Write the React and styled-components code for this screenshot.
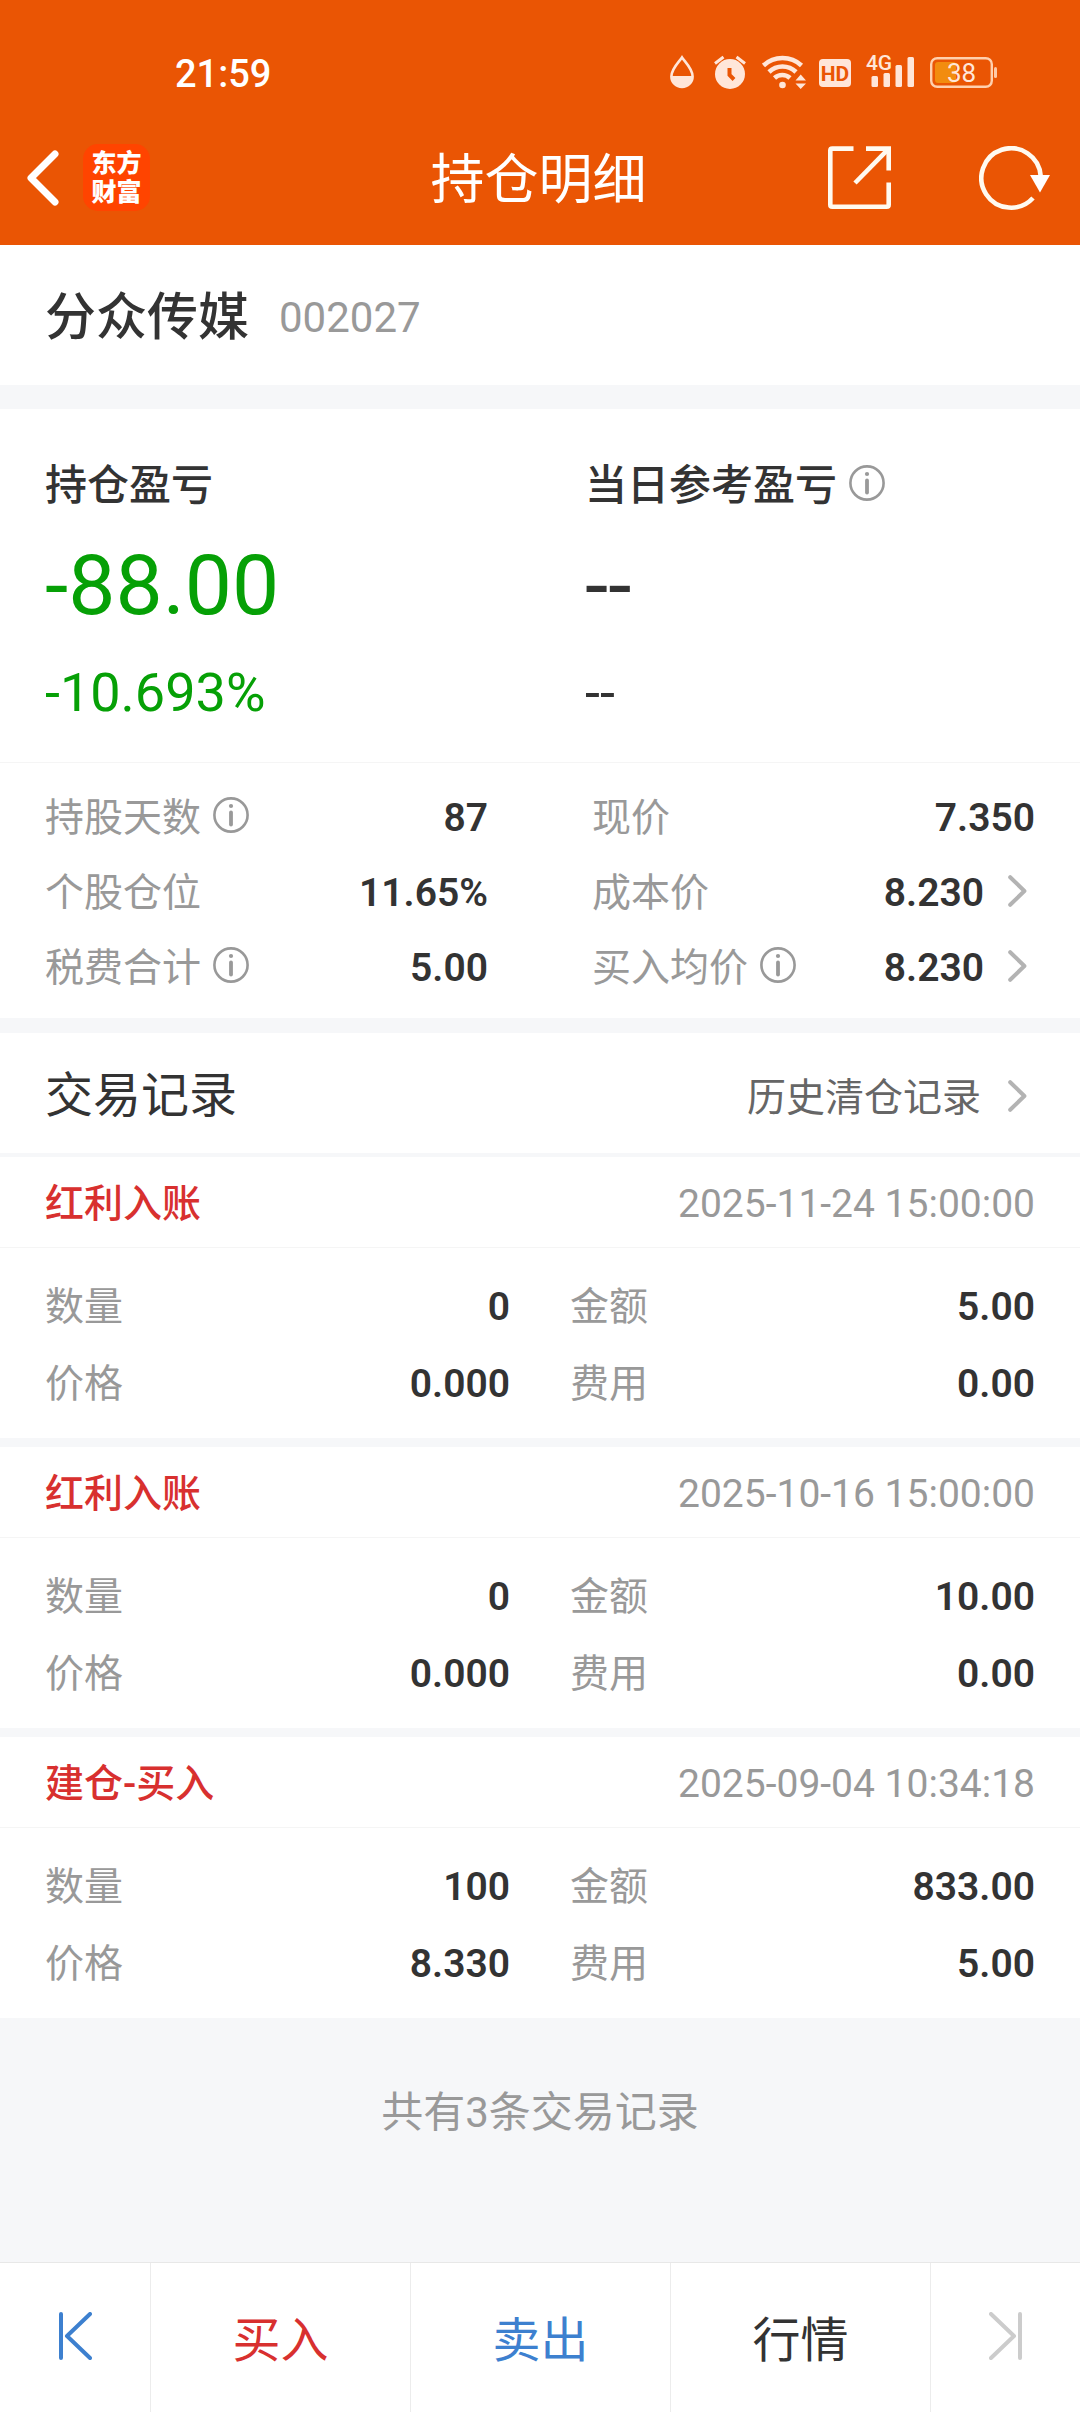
import React from "react";
import styled, { createGlobalStyle } from "styled-components";

const profit = [
  { label: "持仓盈亏", amount: "-88.00", percent: "-10.693%", isDown: true },
  { label: "当日参考盈亏", amount: "--", percent: "--", hasInfo: true }
];

const details = [
  { label: "持股天数", value: "87", hasInfo: true },
  { label: "现价", value: "7.350" },
  { label: "个股仓位", value: "11.65%" },
  { label: "成本价", value: "8.230", hasLink: true },
  { label: "税费合计", value: "5.00", hasInfo: true },
  { label: "买入均价", value: "8.230", hasInfo: true, hasLink: true }
];

const records = [
  {
    type: "红利入账",
    time: "2025-11-24 15:00:00",
    count: "0",
    amount: "5.00",
    price: "0.000",
    fee: "0.00"
  },
  {
    type: "红利入账",
    time: "2025-10-16 15:00:00",
    count: "0",
    amount: "10.00",
    price: "0.000",
    fee: "0.00"
  },
  {
    type: "建仓-买入",
    time: "2025-09-04 10:34:18",
    count: "100",
    amount: "833.00",
    price: "8.330",
    fee: "5.00"
  }
];

export default function App() {
  return (
    <>
      <GlobalStyle />
      <Page>
        <Header>
          <StatusBar>
            <Clock>21:59</Clock>
            <StatusIcons />
          </StatusBar>
          <NavBar>
            <NavGroup>
              <IconButton aria-label="返回">
                <BackIcon />
              </IconButton>
              <Logo>
                <span>东方</span>
                <span>财富</span>
              </Logo>
            </NavGroup>
            <Title>持仓明细</Title>
            <NavActions>
              <IconButton aria-label="分享">
                <ShareIcon />
              </IconButton>
              <IconButton aria-label="刷新">
                <RefreshIcon />
              </IconButton>
            </NavActions>
          </NavBar>
        </Header>

        <StockBar>
          <StockName>分众传媒</StockName>
          <StockCode>002027</StockCode>
        </StockBar>

        <ProfitPanel>
          {profit.map(item => (
            <ProfitColumn key={item.label}>
              <ProfitLabel>
                {item.label}
                {item.hasInfo && <Info label={item.label} />}
              </ProfitLabel>
              <ProfitAmount isDown={item.isDown}>{item.amount}</ProfitAmount>
              <ProfitPercent isDown={item.isDown}>{item.percent}</ProfitPercent>
            </ProfitColumn>
          ))}
        </ProfitPanel>

        <DetailList>
          {details.map(item => (
            <DetailRow key={item.label}>
              <Term>
                {item.label}
                {item.hasInfo && <Info label={item.label} />}
              </Term>
              <Value>
                {item.value}
                {item.hasLink && (
                  <ArrowButton aria-label={`查看${item.label}`}>
                    <ChevronIcon />
                  </ArrowButton>
                )}
              </Value>
            </DetailRow>
          ))}
        </DetailList>

        <SectionHead>
          <SectionTitle>交易记录</SectionTitle>
          <HistoryLink href="#history">
            历史清仓记录
            <ChevronIcon />
          </HistoryLink>
        </SectionHead>

        <RecordList>
          {records.map(record => (
            <Record key={record.time}>
              <RecordHead>
                <RecordType>{record.type}</RecordType>
                <RecordTime>{record.time}</RecordTime>
              </RecordHead>
              <RecordBody>
                <RecordField label="数量" value={record.count} />
                <RecordField label="金额" value={record.amount} />
                <RecordField label="价格" value={record.price} />
                <RecordField label="费用" value={record.fee} />
              </RecordBody>
            </Record>
          ))}
        </RecordList>

        <Summary>共有{records.length}条交易记录</Summary>

        <BottomBar>
          <StepButton color="#3d80cf" aria-label="上一个">
            <StepIcon />
          </StepButton>
          <BarButton color="#d8302f">买入</BarButton>
          <BarButton color="#3d80cf">卖出</BarButton>
          <BarButton color="#333">行情</BarButton>
          <StepButton color="#ccc" aria-label="下一个">
            <StepIcon isNext />
          </StepButton>
        </BottomBar>
      </Page>
    </>
  );
}

function RecordField({ label, value }) {
  return (
    <RecordRow>
      <Term>{label}</Term>
      <Value>{value}</Value>
    </RecordRow>
  );
}

function Info({ label }) {
  return (
    <InfoButton aria-label={`${label}说明`}>
      <svg width="36" height="36" viewBox="0 0 36 36">
        <circle cx="18" cy="18" r="16.6" fill="none" stroke="#999" strokeWidth="2.6" />
        <circle cx="18" cy="9" r="2.1" fill="#999" />
        <path d="M18 15.5V27.5" stroke="#999" strokeWidth="3.8" strokeLinecap="round" />
      </svg>
    </InfoButton>
  );
}

function BackIcon() {
  return (
    <svg width="32" height="56" viewBox="0 0 32 56" fill="none">
      <path
        d="M28 4L4 28L28 52"
        stroke="#fff"
        strokeWidth="7"
        strokeLinecap="round"
        strokeLinejoin="round"
      />
    </svg>
  );
}

function ShareIcon() {
  return (
    <svg width="63" height="63" viewBox="0 0 63 63" fill="none" stroke="#fffaf0" strokeWidth="4.6">
      <path d="M25.5 2.6H4.3Q2.3 2.6 2.3 4.6V58.7Q2.3 60.7 4.3 60.7H58.7Q60.7 60.7 60.7 58.7V36.5" />
      <path d="M38 2.6H60.7V24.5" />
      <path d="M60 3.3L27 37" />
    </svg>
  );
}

function RefreshIcon() {
  return (
    <svg width="71" height="64" viewBox="0 0 71 64" fill="none">
      <path d="M61.7 30A29.7 29.7 0 1 0 54 52" stroke="#fffaf0" strokeWidth="4.6" />
      <path d="M51 29H71L61 46.5Z" fill="#fff" />
    </svg>
  );
}

function ChevronIcon() {
  return (
    <Chevron width="19" height="32" viewBox="0 0 19 32" fill="none">
      <path
        d="M2.2 2.2L16.4 16L2.2 29.8"
        stroke="#b3b3b3"
        strokeWidth="4"
        strokeLinecap="round"
        strokeLinejoin="round"
      />
    </Chevron>
  );
}

function StepIcon({ isNext }) {
  return (
    <svg
      width="34"
      height="48"
      viewBox="0 0 34 48"
      fill="none"
      stroke="currentColor"
      strokeWidth="4"
      strokeLinecap="round"
      strokeLinejoin="round"
    >
      {isNext ? (
        <path d="M31 2V46M2 2L25 24L2 46" />
      ) : (
        <path d="M3 2V46M32 2L9 24L32 46" />
      )}
    </svg>
  );
}

function StatusIcons() {
  return (
    <StatusGroup>
      {/* eye comfort */}
      <svg width="28" height="34" viewBox="0 0 28 34">
        <path
          d="M12 2.4C9 7 1.4 13.5 1.4 21.4A10.6 10.6 0 0 0 22.6 21.4C22.6 13.5 15 7 12 2.4Z"
          fill="none"
          stroke="#ffe6d9"
          strokeWidth="2.6"
        />
        <path d="M1.4 21H22.6A10.6 11 0 0 1 1.4 21Z" fill="#ffe6d9" />
      </svg>
      {/* alarm */}
      <svg width="32" height="34" viewBox="0 0 32 34">
        <circle cx="16" cy="19" r="15" fill="#ffe6d9" />
        <path d="M1 8.5L9.5 2M31 8.5L22.5 2" stroke="#ffe6d9" strokeWidth="3" />
        <path d="M15.5 13V20L20 24.5" stroke="#ea5504" strokeWidth="4" fill="none" />
      </svg>
      {/* wifi */}
      <svg width="41" height="34" viewBox="0 0 41 34" overflow="visible">
        <g fill="none" stroke="#ffe6d9" strokeWidth="4.6">
          <path d="M1.5 10.5A28 28 0 0 1 39.5 10.5" />
          <path d="M7 17A19.5 19.5 0 0 1 34 17" />
          <path d="M12.5 23A11.5 11.5 0 0 1 28 23" />
        </g>
        <circle cx="20.5" cy="30" r="3.3" fill="#ffe6d9" />
        <path d="M33.5 25.5L38.7 19.5L44 25.5ZM33.5 28.5L38.7 34L44 28.5Z" fill="#ffe6d9" />
      </svg>
      {/* HD voice */}
      <svg width="32" height="34" viewBox="0 0 32 34">
        <rect y="4" width="32" height="28" rx="4" fill="#ffe6d9" />
        <StatusText x="16" y="26" size={21} weight={700} fill="#ea5504">
          HD
        </StatusText>
      </svg>
      {/* signal */}
      <svg width="47" height="34" viewBox="0 0 47 34" overflow="visible">
        <StatusText x="12" y="15" size={21} weight={500} fill="#ffe6d9">
          4G
        </StatusText>
        <g fill="#ffe6d9">
          <rect x="4.5" y="21" width="6.5" height="11" rx="1.5" />
          <rect x="16.5" y="18" width="6.5" height="14" rx="1.5" />
          <rect x="28.5" y="10" width="6.5" height="22" rx="1.5" />
          <rect x="40.5" y="2" width="6.5" height="30" rx="1.5" />
        </g>
      </svg>
      {/* battery */}
      <svg width="67" height="34" viewBox="0 0 67 34">
        <rect x="1.2" y="3.2" width="60.6" height="28.6" rx="6" fill="none" stroke="#ffd0ae" strokeWidth="2.4" />
        <rect x="5" y="7" width="21" height="21" rx="3" fill="#f28c0f" />
        <rect x="64" y="12" width="3" height="11" rx="1.5" fill="#ffc9a6" />
        <StatusText x="31.5" y="27" size={26} weight={400} fill="#ffe6d9">
          38
        </StatusText>
      </svg>
    </StatusGroup>
  );
}

const GlobalStyle = createGlobalStyle`
  body {
    margin: 0;
    background: #f6f7f9;
    color: #333;
    font-family: Roboto, "Noto Sans CJK SC", sans-serif;
  }

  * {
    box-sizing: border-box;
  }

  svg {
    display: block;
    flex-shrink: 0;
  }
`;

const Page = styled.div`
  display: flex;
  flex-direction: column;
  min-height: 100vh;
`;

const Header = styled.header`
  padding-bottom: 35px;
  color: #fff;
  background: #ea5504;
`;

const StatusBar = styled.div`
  display: flex;
  align-items: center;
  justify-content: space-between;
  height: 144px;
  padding: 0 83px 0 175px;
`;

const Clock = styled.span`
  padding-top: 4px;
  font-size: 38px;
  font-weight: 500;
  line-height: 48px;
`;

const StatusGroup = styled.div`
  display: flex;
  align-items: center;
  gap: 16px;
`;

const StatusText = styled.text.withConfig({
  shouldForwardProp: prop => !["size", "weight"].includes(prop)
})`
  font-size: ${props => props.size}px;
  font-weight: ${props => props.weight};
  text-anchor: middle;
`;

const NavBar = styled.div`
  display: grid;
  grid-template-columns: 1fr auto 1fr;
  align-items: center;
  height: 66px;
  padding: 0 30px 0 27px;
`;

const NavGroup = styled.div`
  display: flex;
  align-items: center;
  gap: 24px;
`;

const NavActions = styled(NavGroup)`
  justify-content: flex-end;
  gap: 88px;
`;

const IconButton = styled.button.attrs({ type: "button" })`
  display: flex;
  align-items: center;
  padding: 0;
  border: none;
  background: none;
  cursor: pointer;
`;

const InfoButton = styled(IconButton)`
  padding-bottom: 6px;
`;

const Chevron = styled.svg`
  margin-bottom: 4px;
`;

const Logo = styled.div`
  display: flex;
  flex-direction: column;
  align-items: center;
  justify-content: center;
  width: 67px;
  height: 67px;
  border-radius: 15px;
  background: #ff4400;
  font-size: 25px;
  font-weight: 900;
  line-height: 29px;
`;

const Title = styled.h1`
  margin: 0;
  padding-top: 6px;
  font-size: 54px;
  font-weight: 400;
  line-height: 60px;
`;

const StockBar = styled.section`
  display: flex;
  align-items: center;
  gap: 30px;
  height: 140px;
  padding: 6px 45px 0;
  background: #fff;
`;

const StockName = styled.h2`
  margin: 0;
  font-size: 51px;
  font-weight: 500;
  line-height: 60px;
`;

const StockCode = styled.span`
  color: #999;
  font-size: 42px;
  line-height: 60px;
`;

const ProfitPanel = styled.section`
  display: grid;
  grid-template-columns: 1fr 1fr;
  margin-top: 24px;
  padding: 47px 0 39px;
  border-bottom: 1px solid #f5f5f5;
  background: #fff;
`;

const ProfitColumn = styled.div`
  padding-left: 45px;
`;

const ProfitLabel = styled.div`
  display: flex;
  align-items: center;
  gap: 12px;
  font-size: 42px;
  font-weight: 500;
  line-height: 60px;
`;

const ProfitAmount = styled.div.withConfig({
  shouldForwardProp: prop => prop !== "isDown"
})`
  margin-top: 20px;
  color: ${props => (props.isDown ? "#06a006" : "#333")};
  font-size: 84px;
  line-height: 100px;
`;

const ProfitPercent = styled(ProfitAmount)`
  margin-top: 27px;
  font-size: 54px;
  line-height: 60px;
`;

const DetailList = styled.dl`
  display: grid;
  grid-template-columns: 1fr 1fr;
  column-gap: 104px;
  margin: 0;
  padding: 17px 45px 13px;
  background: #fff;
`;

const DetailRow = styled.div`
  display: flex;
  align-items: center;
  justify-content: space-between;
  height: 75px;
  font-size: 39px;
  line-height: 60px;
`;

const Term = styled.dt`
  display: flex;
  align-items: center;
  gap: 12px;
  color: #999;
`;

const Value = styled.dd`
  display: flex;
  align-items: center;
  gap: 24px;
  margin: 0;
  font-weight: 600;
`;

const ArrowButton = styled(IconButton)`
  padding-right: 8px;
`;

const SectionHead = styled.div`
  display: flex;
  align-items: center;
  justify-content: space-between;
  height: 120px;
  margin-top: 15px;
  padding: 6px 45px 0;
  background: #fff;
`;

const SectionTitle = styled.h2`
  margin: 0;
  font-size: 48px;
  font-weight: 400;
  line-height: 60px;
`;

const HistoryLink = styled.a`
  display: flex;
  align-items: center;
  gap: 27px;
  padding: 4px 8px 0 0;
  color: #666;
  font-size: 39px;
  line-height: 60px;
  text-decoration: none;
`;

const RecordList = styled.div`
  display: flex;
  flex-direction: column;
  gap: 9px;
  margin-top: 4px;
`;

const Record = styled.article`
  background: #fff;
`;

const RecordHead = styled.div`
  display: flex;
  align-items: center;
  justify-content: space-between;
  height: 91px;
  padding: 3px 45px 0;
  border-bottom: 1px solid #f5f5f5;
  font-size: 39px;
  line-height: 60px;
`;

const RecordType = styled.h3`
  margin: 0;
  color: #d8302f;
  font-size: 39px;
  font-weight: 500;
`;

const RecordTime = styled.time`
  color: #999;
`;

const RecordBody = styled.dl`
  display: grid;
  grid-template-columns: 1fr 1fr;
  column-gap: 60px;
  margin: 0;
  padding: 20px 45px 16px;
`;

const RecordRow = styled(DetailRow)`
  height: 77px;
`;

const Summary = styled.p`
  flex: 1;
  margin: 0;
  padding: 65px 45px;
  color: #999;
  font-size: 42px;
  line-height: 60px;
  text-align: center;
`;

const BottomBar = styled.nav`
  display: grid;
  grid-template-columns: 150px 1fr 1fr 1fr 150px;
  height: 150px;
  border-top: 1px solid #e8e8e8;
  background: #fff;
`;

const BarButton = styled.button.attrs({ type: "button" }).withConfig({
  shouldForwardProp: prop => prop !== "color"
})`
  display: flex;
  align-items: center;
  justify-content: center;
  padding: 6px 0 0;
  border: none;
  background: none;
  color: ${props => props.color};
  font-family: inherit;
  font-size: 48px;
  line-height: 60px;
  cursor: pointer;

  button + & {
    border-left: 1px solid #ececec;
  }
`;

const StepButton = styled(BarButton)`
  padding: 0 0 4px;
`;
